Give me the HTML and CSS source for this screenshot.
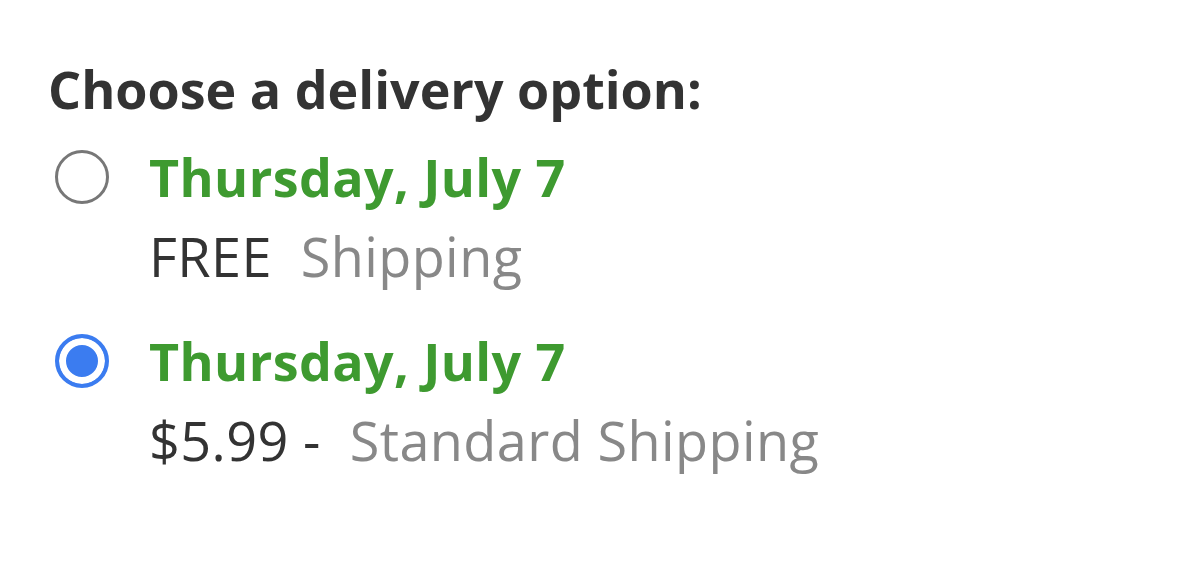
FILE: index.html
```html
<!DOCTYPE html>
<html>
<head>
<meta charset="utf-8">
<link rel="stylesheet" href="styles.css">
</head>
<body>
<div class="page">
  <h1 class="title">Choose a delivery option:</h1>
  <div class="option">
    <span class="radio"></span>
    <div class="info">
      <div class="date">Thursday, July 7</div>
      <div class="price"><span class="cost">FREE</span>&nbsp; <span class="method">Shipping</span></div>
    </div>
  </div>
  <div class="option">
    <span class="radio checked"></span>
    <div class="info">
      <div class="date">Thursday, July 7</div>
      <div class="price"><span class="cost">$5.99 -</span>&nbsp; <span class="method">Standard Shipping</span></div>
    </div>
  </div>
</div>
</body>
</html>
```
FILE: styles.css
```css
* { box-sizing: border-box; }
html, body { margin: 0; padding: 0; background: #fff; }
body { font-family: "Open Sans", "Noto Sans", sans-serif; color: #333; }
.page { padding: 59px 0 0 48px; }
.title { margin: 0 0 28px; font-size: 52px; font-weight: 700; line-height: 60px; color: #333; letter-spacing: 0; }
.option { display: flex; align-items: flex-start; gap: 40px; margin-bottom: 45px; }
.radio { flex: none; width: 54px; height: 54px; margin: 3px 0 0 7px; border: 3px solid #777; border-radius: 50%; background: #fff; }
.radio.checked { border: 4px solid #3b7cf0; box-shadow: inset 0 0 0 7px #fff; background: #3b7cf0; }
.info { display: flex; flex-direction: column; }
.date { font-size: 52px; font-weight: 700; line-height: 60px; color: #3e9a30; margin-bottom: 19px; letter-spacing: 0.4px; }
.price { font-size: 54px; line-height: 60px; color: #333; letter-spacing: 0.4px; }
.method { color: #888; }
```
